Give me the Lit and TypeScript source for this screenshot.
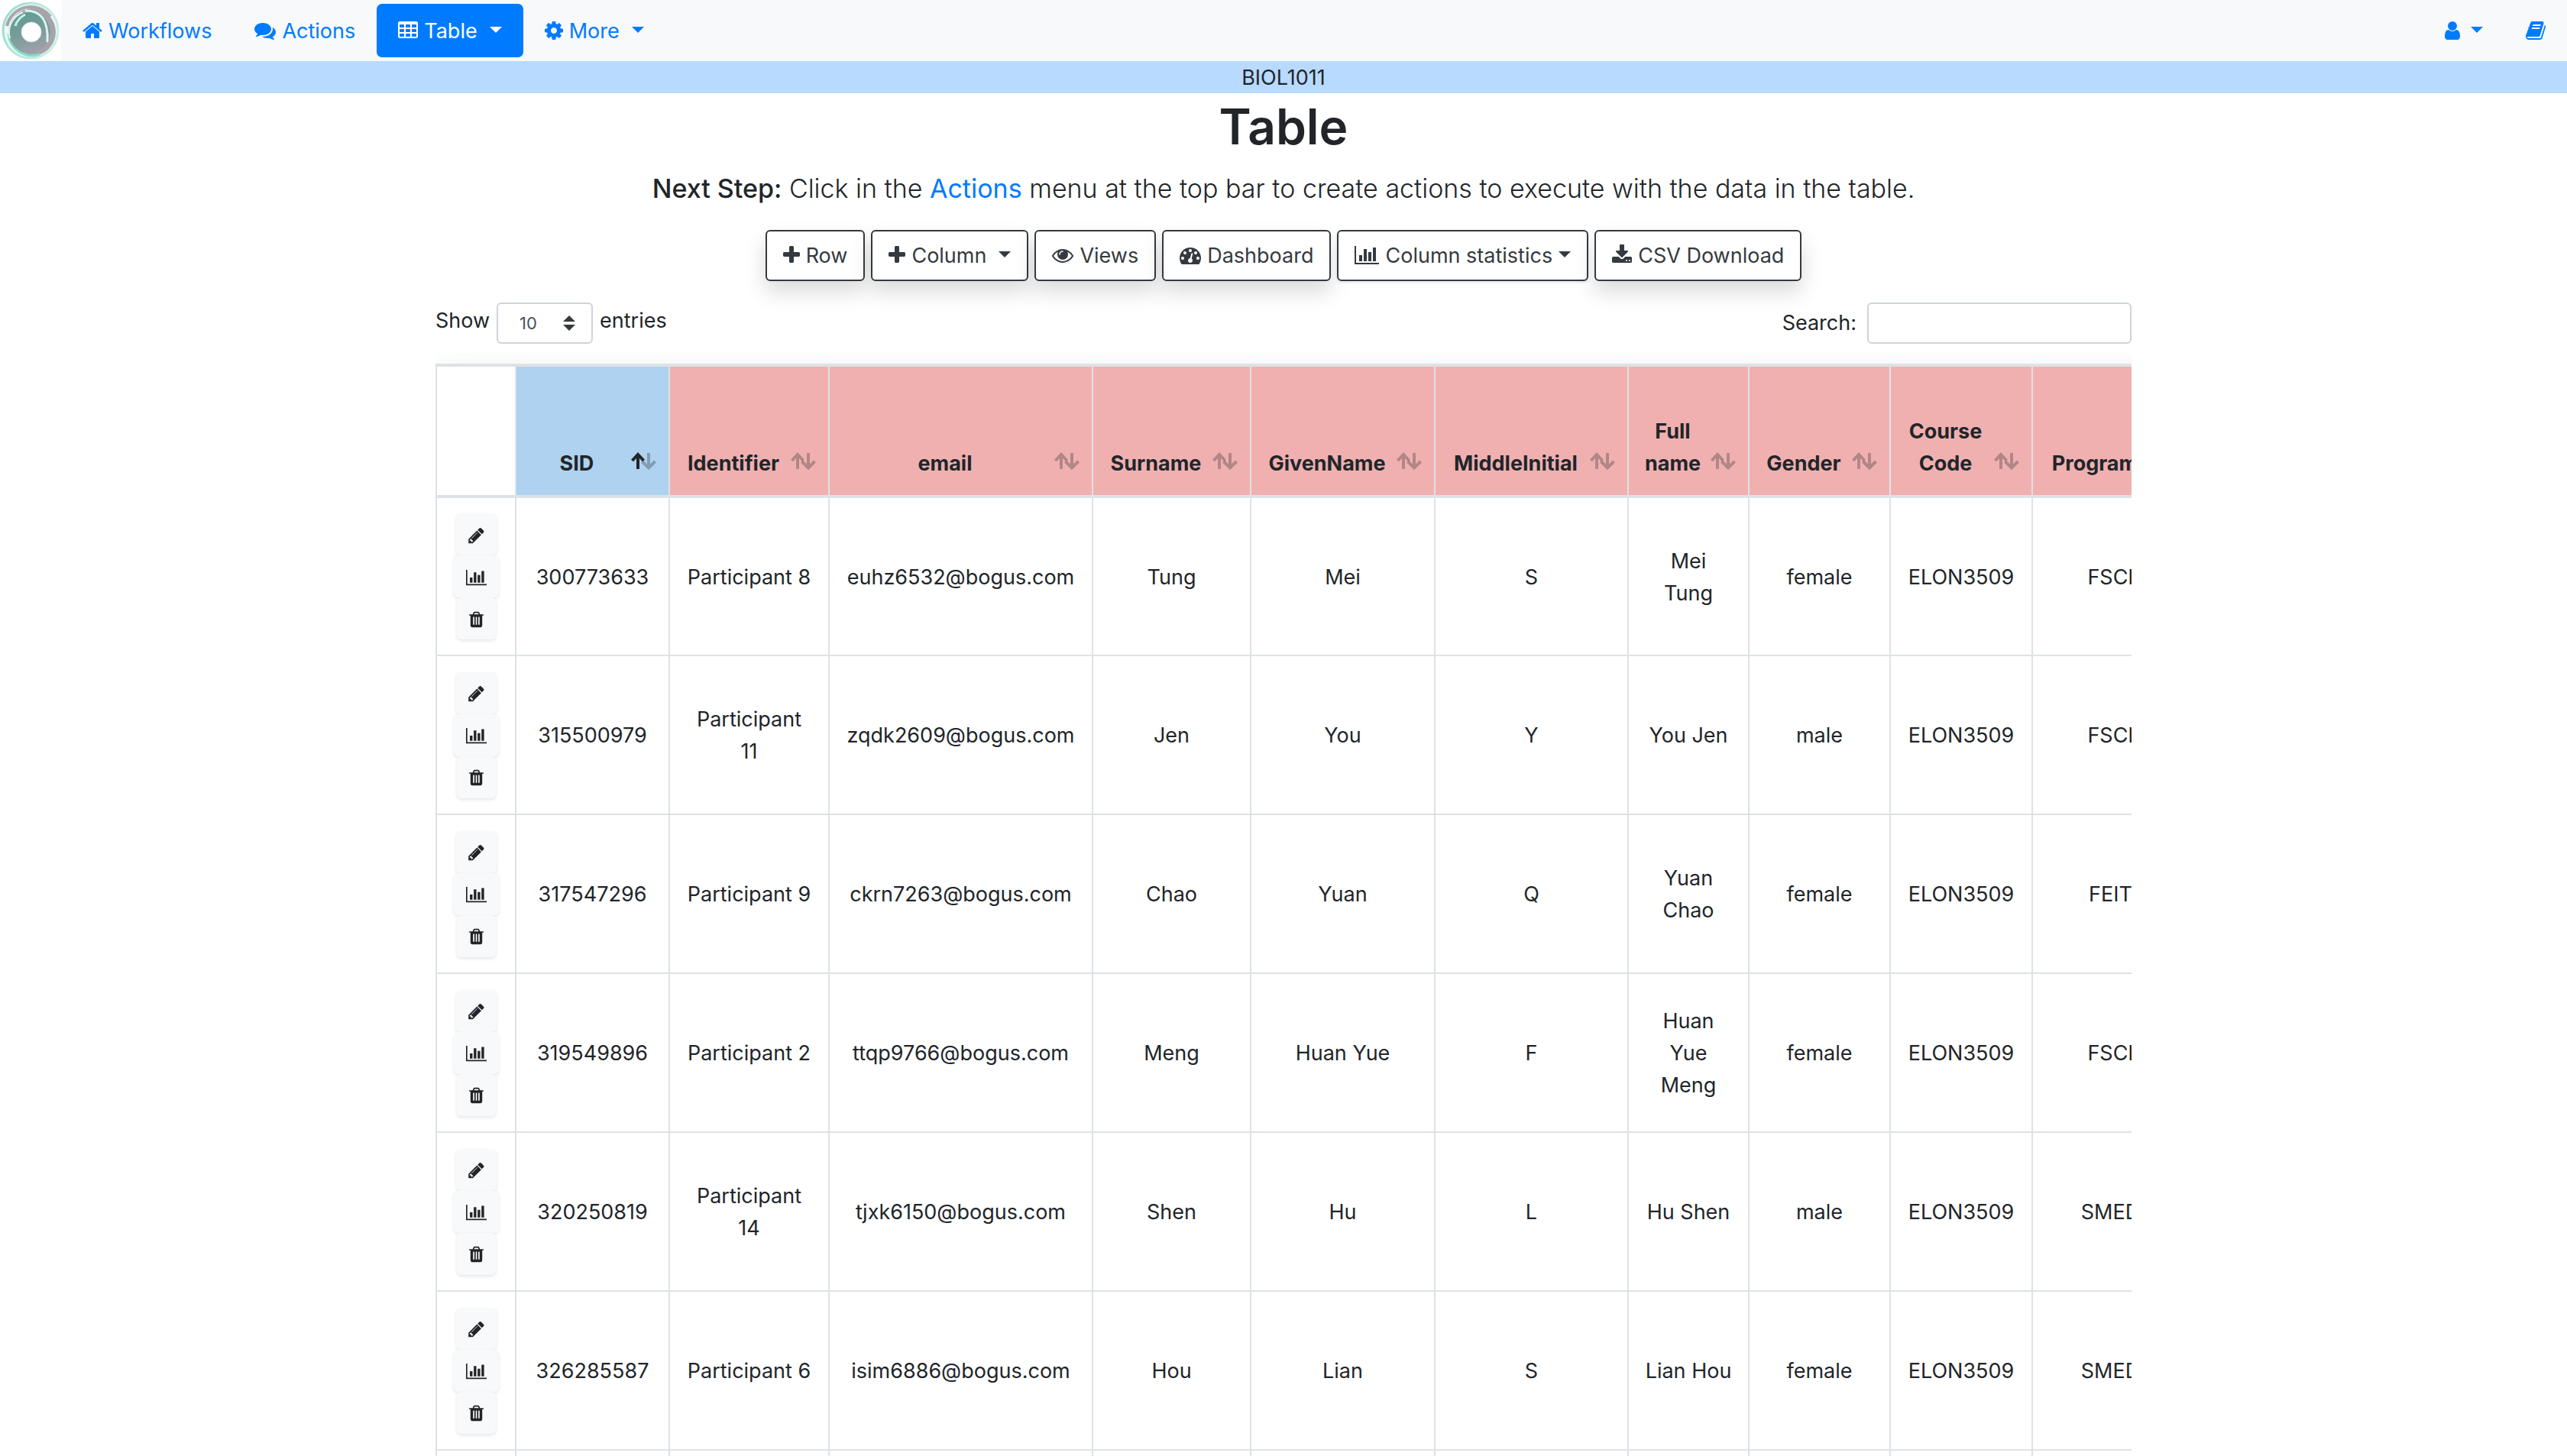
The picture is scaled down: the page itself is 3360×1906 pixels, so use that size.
import { LitElement, html, css, svg } from "lit";
import { customElement } from "lit/decorators.js";

interface Icon {
  box: string;
  w: number;
  d: string;
}

// Glyph outlines on a 1792-unit em; `w` is the advance width in units.
const ICONS: Record<string, Icon> = {
  home: { box: "64 0 1664 1792", w: 1664, d: "M1472 992v480q0 26-19 45t-45 19h-384v-384h-256v384h-384q-26 0-45-19t-19-45v-480q0-1 .5-3t.5-3l575-474 575 474q1 2 1 6zm223-69l-62 74q-8 9-21 11h-3q-13 0-21-7l-692-577-692 577q-12 8-24 7-13-2-21-11l-62-74q-8-10-7-23.5t11-21.5l719-599q32-26 76-26t76 26l244 204v-195q0-14 9-23t23-9h192q14 0 23 9t9 23v408l219 182q10 8 11 21.5t-7 23.5z" },
  comments: { box: "0 0 1792 1792", w: 1792, d: "M1408 768q0 139-94 257t-256.5 186.5-353.5 68.5q-86 0-176-16-124 88-278 128-36 9-86 16h-3q-11 0-20.5-8t-11.5-21q-1-3-1-6.5t.5-6.5 2-6l2.5-5 3.5-5.5 4-5 4.5-5 4-4.5q5-6 23-25t26-29.5 22.5-29 25-38.5 20.5-44q-124-72-195-177t-71-224q0-139 94-257t256.5-186.5 353.5-68.5 353.5 68.5 256.5 186.5 94 257zm384 256q0 120-71 224.5t-195 176.5q10 24 20.5 44t25 38.5 22.5 29 26 29.5 23 25q1 1 4 4.5t4.5 5 4 5 3.5 5.5l2.5 5 2 6 .5 6.5-1 6.5q-3 14-13 22t-22 7q-50-7-86-16-154-40-278-128-90 16-176 16-271 0-472-132 58 4 88 4 161 0 309-45t264-129q125-92 192-212t67-254q0-77-23-152 129 71 204 178t75 230z" },
  table: { box: "64 0 1664 1792", w: 1664, d: "M576 1376v-192q0-14-9-23t-23-9h-320q-14 0-23 9t-9 23v192q0 14 9 23t23 9h320q14 0 23-9t9-23zm0-384v-192q0-14-9-23t-23-9h-320q-14 0-23 9t-9 23v192q0 14 9 23t23 9h320q14 0 23-9t9-23zm512 384v-192q0-14-9-23t-23-9h-320q-14 0-23 9t-9 23v192q0 14 9 23t23 9h320q14 0 23-9t9-23zm-512-768v-192q0-14-9-23t-23-9h-320q-14 0-23 9t-9 23v192q0 14 9 23t23 9h320q14 0 23-9t9-23zm512 384v-192q0-14-9-23t-23-9h-320q-14 0-23 9t-9 23v192q0 14 9 23t23 9h320q14 0 23-9t9-23zm512 384v-192q0-14-9-23t-23-9h-320q-14 0-23 9t-9 23v192q0 14 9 23t23 9h320q14 0 23-9t9-23zm-512-768v-192q0-14-9-23t-23-9h-320q-14 0-23 9t-9 23v192q0 14 9 23t23 9h320q14 0 23-9t9-23zm512 384v-192q0-14-9-23t-23-9h-320q-14 0-23 9t-9 23v192q0 14 9 23t23 9h320q14 0 23-9t9-23zm0-384v-192q0-14-9-23t-23-9h-320q-14 0-23 9t-9 23v192q0 14 9 23t23 9h320q14 0 23-9t9-23zm128-320v1088q0 66-47 113t-113 47h-1344q-66 0-113-47t-47-113v-1088q0-66 47-113t113-47h1344q66 0 113 47t47 113z" },
  cog: { box: "128 0 1536 1792", w: 1536, d: "M1152 896q0-106-75-181t-181-75-181 75-75 181 75 181 181 75 181-75 75-181zm512-109v222q0 12-8 23t-20 13l-185 28q-19 54-39 91 35 50 107 138 10 12 10 25t-9 23q-27 37-99 108t-94 71q-12 0-26-9l-138-108q-44 23-91 38-16 136-29 186-7 28-36 28h-222q-14 0-24.5-8.5t-11.5-21.5l-28-184q-49-16-90-37l-141 107q-10 9-25 9-14 0-25-11-126-114-165-168-7-10-7-23 0-12 8-23 15-21 51-66.5t54-70.5q-27-50-41-99l-183-27q-13-2-21-12.5t-8-23.5v-222q0-12 8-23t19-13l186-28q14-46 39-92-40-57-107-138-10-12-10-24 0-10 9-23 26-36 98.5-107.5t94.5-71.5q13 0 26 10l138 107q44-23 91-38 16-136 29-186 7-28 36-28h222q14 0 24.5 8.5t11.5 21.5l28 184q49 16 90 37l142-107q9-9 24-9 13 0 25 10 129 119 165 170 7 8 7 22 0 12-8 23-15 21-51 66.5t-54 70.5q26 50 41 98l183 28q13 2 21 12.5t8 23.5z" },
  user: { box: "256 0 1280 1792", w: 1280, d: "M1536 1399q0 109-62.5 187t-150.5 78h-854q-88 0-150.5-78t-62.5-187q0-85 8.5-160.5t31.5-152 58.5-131 94-89 134.5-34.5q131 128 313 128t313-128q76 0 134.5 34.5t94 89 58.5 131 31.5 152 8.5 160.5zm-256-887q0 159-112.5 271.5t-271.5 112.5-271.5-112.5-112.5-271.5 112.5-271.5 271.5-112.5 271.5 112.5 112.5 271.5z" },
  book: { box: "64 0 1664 1792", w: 1664, d: "M1703 478q40 57 18 129l-275 906q-19 64-76.5 107.5t-122.5 43.5h-923q-77 0-148.5-53.5t-99.5-131.5q-24-67-2-127 0-4 3-27t4-37q1-8-3-21.5t-3-19.5q2-11 8-21t16.5-23.5 16.5-23.5q23-38 45-91.5t30-91.5q3-10 .5-30t-.5-28q3-11 17-28t17-23q21-36 42-92t25-90q1-9-2.5-32t.5-28q4-13 22-30.5t22-22.5q19-26 42.5-84.5t27.5-96.5q1-8-3-25.5t-2-26.5q2-8 9-18t18-23 17-21q8-12 16.5-30.5t15-35 16-36 19.5-32 26.5-23.5 36-11.5 47.5 5.5l-1 3q38-9 51-9h761q74 0 114 56t18 130l-274 906q-36 119-71.5 153.5t-128.5 34.5h-869q-27 0-38 15-11 16-1 43 24 70 144 70h923q29 0 56-15.5t35-41.5l300-987q7-22 5-57 38 15 59 43zm-1064 2q-4 13 2 22.5t20 9.5h608q13 0 25.5-9.5t16.5-22.5l21-64q4-13-2-22.5t-20-9.5h-608q-13 0-25.5 9.5t-16.5 22.5zm-83 256q-4 13 2 22.5t20 9.5h608q13 0 25.5-9.5t16.5-22.5l21-64q4-13-2-22.5t-20-9.5h-608q-13 0-25.5 9.5t-16.5 22.5z" },
  plus: { box: "192 0 1408 1792", w: 1408, d: "M1600 736v192q0 40-28 68t-68 28h-416v416q0 40-28 68t-68 28h-192q-40 0-68-28t-28-68v-416h-416q-40 0-68-28t-28-68v-192q0-40 28-68t68-28h416v-416q0-40 28-68t68-28h192q40 0 68 28t28 68v416h416q40 0 68 28t28 68z" },
  eye: { box: "0 0 1792 1792", w: 1792, d: "M1664 960q-152-236-381-353 61 104 61 225 0 185-131.5 316.5t-316.5 131.5-316.5-131.5-131.5-316.5q0-121 61-225-229 117-381 353 133 205 333.5 326.5t434.5 121.5 434.5-121.5 333.5-326.5zm-720-384q0-20-14-34t-34-14q-125 0-214.5 89.5t-89.5 214.5q0 20 14 34t34 14 34-14 14-34q0-86 61-147t147-61q20 0 34-14t14-34zm848 384q0 34-20 69-140 230-376.5 368.5t-499.5 138.5-499.5-139-376.5-368q-20-35-20-69t20-69q140-229 376.5-368t499.5-139 499.5 139 376.5 368q20 35 20 69z" },
  gauge: { box: "0 0 1792 1792", w: 1792, d: "M384 1152q0-53-37.5-90.5t-90.5-37.5-90.5 37.5-37.5 90.5 37.5 90.5 90.5 37.5 90.5-37.5 37.5-90.5zm192-448q0-53-37.5-90.5t-90.5-37.5-90.5 37.5-37.5 90.5 37.5 90.5 90.5 37.5 90.5-37.5 37.5-90.5zm428 481l101-382q6-26-7.5-48.5t-38.5-29.5-48 6.5-30 39.5l-101 382q-60 5-107 43.5t-63 98.5q-20 77 20 146t117 89 146-20 89-117q16-60-6-117t-72-91zm660-33q0-53-37.5-90.5t-90.5-37.5-90.5 37.5-37.5 90.5 37.5 90.5 90.5 37.5 90.5-37.5 37.5-90.5zm-640-640q0-53-37.5-90.5t-90.5-37.5-90.5 37.5-37.5 90.5 37.5 90.5 90.5 37.5 90.5-37.5 37.5-90.5zm448 192q0-53-37.5-90.5t-90.5-37.5-90.5 37.5-37.5 90.5 37.5 90.5 90.5 37.5 90.5-37.5 37.5-90.5zm320 448q0 261-141 483-19 29-54 29h-1402q-35 0-54-29-141-221-141-483 0-182 71-348t191-286 286-191 348-71 348 71 286 191 191 286 71 348z" },
  chart: { box: "0 128 2048 1792", w: 2048, d: "M640 1024v512h-256v-512h256zm384-512v1024h-256v-1024h256zm1024 1152v128h-2048v-1536h128v1408h1920zm-640-896v768h-256v-768h256zm384-384v1152h-256v-1152h256z" },
  download: { box: "64 0 1664 1792", w: 1664, d: "M1344 1344q0-26-19-45t-45-19-45 19-19 45 19 45 45 19 45-19 19-45zm256 0q0-26-19-45t-45-19-45 19-19 45 19 45 45 19 45-19 19-45zm128-224v320q0 40-28 68t-68 28h-1472q-40 0-68-28t-28-68v-320q0-40 28-68t68-28h465l135 136q58 56 136 56t136-56l136-136h464q40 0 68 28t28 68zm-325-569q17 41-14 70l-448 448q-18 19-45 19t-45-19l-448-448q-31-29-14-70 17-39 59-39h256v-448q0-26 19-45t45-19h256q26 0 45 19t19 45v448h256q42 0 59 39z" },
  pencil: { box: "128 0 1536 1792", w: 1536, d: "M491 1536l91-91-235-235-91 91v107h128v128h107zm523-928q0-22-22-22-10 0-17 7l-542 542q-7 7-7 17 0 22 22 22 10 0 17-7l542-542q7-7 7-17zm-54-192l416 416-832 832h-416v-416zm683 96q0 53-37 90l-166 166-416-416 166-165q36-38 90-38 53 0 91 38l235 234q37 39 37 91z" },
  trash: { box: "192 0 1408 1792", w: 1408, d: "M704 1376v-704q0-14-9-23t-23-9h-64q-14 0-23 9t-9 23v704q0 14 9 23t23 9h64q14 0 23-9t9-23zm256 0v-704q0-14-9-23t-23-9h-64q-14 0-23 9t-9 23v704q0 14 9 23t23 9h64q14 0 23-9t9-23zm256 0v-704q0-14-9-23t-23-9h-64q-14 0-23 9t-9 23v704q0 14 9 23t23 9h64q14 0 23-9t9-23zm-544-992h448l-48-117q-7-9-17-11h-317q-10 2-17 11zm928 32v64q0 14-9 23t-23 9h-96v948q0 83-47 143.5t-113 60.5h-832q-66 0-113-58.5t-47-141.5v-952h-96q-14 0-23-9t-9-23v-64q0-14 9-23t23-9h309l70-167q15-37 54-63t79-26h320q40 0 79 26t54 63l70 167h309q14 0 23 9t9 23z" },
};

const icon = (name: string, size = 28) => {
  const i = ICONS[name];
  return html`<svg class="icon" aria-hidden="true" viewBox=${i.box} width=${Math.round((i.w * size) / 1792)} height=${size}>${svg`<path d=${i.d}></path>`}</svg>`;
};

const COLUMNS = ["SID", "Identifier", "email", "Surname", "GivenName", "MiddleInitial", "Full\nname", "Gender", "Course\nCode", "Program"];

const ROWS = [
  ["300773633", "Participant 8", "euhz6532@bogus.com", "Tung", "Mei", "S", "Mei\nTung", "female", "ELON3509", "FSCI"],
  ["315500979", "Participant\n11", "zqdk2609@bogus.com", "Jen", "You", "Y", "You Jen", "male", "ELON3509", "FSCI"],
  ["317547296", "Participant 9", "ckrn7263@bogus.com", "Chao", "Yuan", "Q", "Yuan\nChao", "female", "ELON3509", "FEIT"],
  ["319549896", "Participant 2", "ttqp9766@bogus.com", "Meng", "Huan Yue", "F", "Huan\nYue\nMeng", "female", "ELON3509", "FSCI"],
  ["320250819", "Participant\n14", "tjxk6150@bogus.com", "Shen", "Hu", "L", "Hu Shen", "male", "ELON3509", "SMED"],
  ["326285587", "Participant 6", "isim6886@bogus.com", "Hou", "Lian", "S", "Lian Hou", "female", "ELON3509", "SMED"],
];

@customElement("app-root")
export class AppRoot extends LitElement {
  static styles = css`
    :host {
      display: block;
      height: 100vh;
      overflow-y: auto;
      scrollbar-width: none;
      background: #fff;
      color: #212529;
      font: 400 27px/42px Inter, "Liberation Sans", sans-serif;
    }
    *, *::before, *::after { box-sizing: border-box; }
    a { color: #007bff; text-decoration: none; }
    button, select, input { font: inherit; color: inherit; margin: 0; }
    button { cursor: pointer; }
    .icon { fill: currentColor; vertical-align: -4px; flex: none; }
    .caret {
      display: inline-block;
      border: 8px solid transparent;
      border-top-color: currentColor;
      border-bottom: 0;
      vertical-align: 7px;
      margin-left: 16px;
    }
    .caret.near { margin-left: 8px; }

    .nav { display: flex; align-items: center; height: 80px; background: #f8f9fa; }
    .logo { display: block; }
    .menu { display: flex; flex: 1; }
    .item {
      display: block;
      height: 70px;
      padding: 15px 28px 13px;
      border: 0;
      border-radius: 7px;
      background: none;
      color: #007bff;
      white-space: nowrap;
    }
    .item .icon { margin-right: 8px; }
    .item.active { background: #007bff; color: #fff; }
    .item.tool .icon { margin-right: 0; }
    .item.tool .caret { margin-left: 14px; }

    .course { background: #b8daff; text-align: center; height: 42px; line-height: 44px; }
    .page { max-width: 2220px; margin: 0 auto; }
    h1 { margin: 2px 0 0; font-size: 64px; line-height: 84px; font-weight: 600; text-align: center; }
    .lead { margin: 12px 0 0; font-size: 34px; line-height: 54px; font-weight: 300; text-align: center; }
    .lead b { font-weight: 500; }
    .lead a { font-weight: 400; }

    .toolbar { display: flex; justify-content: center; gap: 8px; margin-top: 27px; }
    .btn {
      height: 67px;
      padding: 0 21px;
      border: 2px solid #343a40;
      border-radius: 6px;
      background: #fff;
      color: #343a40;
      white-space: nowrap;
      box-shadow: 0 14px 28px rgba(0, 0, 0, 0.15);
    }
    .btn.flat { box-shadow: 0 2px 4px rgba(0, 0, 0, 0.1); }
    .btn .icon { margin-right: 8px; }

    .controls { display: flex; justify-content: space-between; margin: 28px 0 12px; }
    .controls label { display: flex; }
    .length { gap: 9px; line-height: 48px; }
    .search { gap: 14px; line-height: 54px; }
    .pick {
      width: 126px;
      height: 54px;
      padding: 0 24px 0 28px;
      border: 2px solid #ced4da;
      border-radius: 6px;
      appearance: none;
      color: #495057;
      font-size: 22px;
      background: #fff url("data:image/svg+xml,%3csvg xmlns='http://www.w3.org/2000/svg' viewBox='0 0 4 5'%3e%3cpath fill='%23343a40' d='M2 0L0 2h4zm0 5L0 3h4z'/%3e%3c/svg%3e") no-repeat right 21px center / 16px 20px;
    }
    .find { width: 346px; height: 54px; border: 2px solid #ced4da; border-radius: 6px; background: #fff; padding: 0 14px; }

    .scroller { overflow-x: auto; scrollbar-width: none; padding-top: 14px; }
    .grid { width: 2294px; table-layout: fixed; border-collapse: collapse; text-align: center; box-shadow: 0 14px 42px rgba(0, 0, 0, 0.1); }
    .grid th, .grid td { border: 2px solid #dee2e6; padding: 0; white-space: pre-line; }
    .grid th {
      height: 172px;
      border-top-width: 4px;
      border-bottom-width: 4px;
      padding: 0 0 20px;
      vertical-align: bottom;
      background: #f1b0b0;
      font-weight: 700;
    }
    .grid th.blank { background: #fff; }
    .grid th.key { background: #aed2f0; }
    .grid td { height: 208px; vertical-align: middle; padding-top: 2px; }
    .grid td.tools { padding-top: 0; }
    .c-actions { width: 104px; }
    .c-0 { width: 201px; } .c-1 { width: 209px; } .c-2 { width: 345px; }
    .c-3 { width: 207px; } .c-4 { width: 241px; } .c-5 { width: 253px; }
    .c-6 { width: 158px; } .c-7 { width: 185px; } .c-8 { width: 186px; }
    .c-9 { width: 205px; }
    .head { display: flex; align-items: flex-end; gap: 10px; padding: 0 16px 0 18px; }
    .head .name { flex: 1; }
    .sort { flex: none; margin-bottom: 12px; fill: none; stroke: currentColor; stroke-width: 4; }
    .dim { opacity: 0.3; }

    .ops { display: flex; flex-direction: column; align-items: center; }
    .op {
      height: 55px;
      padding: 0 16px;
      border: 0;
      border-radius: 6px;
      background: #f8f9fa;
      box-shadow: 0 2px 4px rgba(0, 0, 0, 0.1);
      line-height: 42px;
    }
  `;

  private sortIcon(sorted: boolean) {
    return html`<svg class="sort" width="33" height="24" viewBox="0 0 33 24" aria-hidden="true">
      ${svg`<path class=${sorted ? "" : "dim"} d="M9 22V3M1.5 11L9 3L16.5 11"></path>
      <path class="dim" d="M23 1V20M14.5 12L23 20.500L31.500 12"></path>`}
    </svg>`;
  }

  private logo() {
    return html`<svg class="logo" width="80" height="80" viewBox="0 0 80 80" role="img" aria-label="Home">
      ${svg`<defs>
        <linearGradient id="disc" x1="0.3" y1="0" x2="0.6" y2="1">
          <stop offset="0" stop-color="#5f9c94"></stop>
          <stop offset="0.55" stop-color="#7d9c9b"></stop>
          <stop offset="1" stop-color="#a3a1ab"></stop>
        </linearGradient>
        <linearGradient id="rim" x1="0" y1="0" x2="1" y2="0.4">
          <stop offset="0" stop-color="#8fdccb"></stop>
          <stop offset="0.5" stop-color="#b5e6dc"></stop>
          <stop offset="1" stop-color="#c9ece5"></stop>
        </linearGradient>
      </defs>
      <rect width="80" height="80" fill="#fff"></rect>
      <circle cx="40" cy="40" r="36" fill="#eef7f5" stroke="url(#rim)" stroke-width="3"></circle>
      <path d="M9 34A32 32 0 0 1 66 22" fill="none" stroke="#a9a5b0" stroke-width="4"></path>
      <circle cx="42" cy="42" r="31" fill="#a6a3ad"></circle>
      <path d="M11 44A31 31 0 0 0 52 71" fill="none" stroke="#7fe0c9" stroke-width="3"></path>
      <circle cx="39" cy="43" r="27" fill="url(#disc)"></circle>
      <path d="M13 50A28 28 0 0 1 30 16" fill="none" stroke="#e6faf5" stroke-width="2"></path>
      <path d="M20 34Q23 24 33 19" fill="none" stroke="#c4f2e7" stroke-width="3"></path>
      <path d="M34 14Q64 14 62 54" fill="none" stroke="#d9f5ee" stroke-width="3" stroke-linecap="round"></path>
      <circle cx="41" cy="42" r="13" fill="#fff" stroke="#cfe0dd" stroke-width="1"></circle>`}
    </svg>`;
  }

  render() {
    return html`
      <nav class="nav">
        ${this.logo()}
        <div class="menu">
          <a class="item" href="#workflows">${icon("home")}Workflows</a>
          <a class="item" href="#actions">${icon("comments")}Actions</a>
          <button class="item active" type="button">${icon("table")}Table<span class="caret"></span></button>
          <button class="item" type="button">${icon("cog")}More<span class="caret"></span></button>
        </div>
        <button class="item tool" type="button" aria-label="Account">${icon("user")}<span class="caret"></span></button>
        <a class="item tool" href="#docs" aria-label="Documentation">${icon("book")}</a>
      </nav>
      <div class="course">BIOL1011</div>
      <main class="page">
        <h1>Table</h1>
        <p class="lead"><b>Next Step:</b> Click in the <a href="#actions">Actions</a> menu at the top bar to create actions to execute with the data in the table.</p>
        <div class="toolbar">
          <button class="btn" type="button">${icon("plus")}Row</button>
          <button class="btn" type="button">${icon("plus")}Column<span class="caret"></span></button>
          <button class="btn" type="button">${icon("eye")}Views</button>
          <button class="btn" type="button">${icon("gauge")}Dashboard</button>
          <button class="btn flat" type="button">${icon("chart")}Column statistics<span class="caret near"></span></button>
          <button class="btn" type="button">${icon("download")}CSV Download</button>
        </div>
        <div class="controls">
          <label class="length">Show <select class="pick"><option>10</option></select> entries</label>
          <label class="search">Search: <input class="find" type="search" /></label>
        </div>
        <div class="scroller">
          <table class="grid">
            <colgroup>
              <col class="c-actions" />
              ${COLUMNS.map((_, i) => html`<col class="c-${i}" />`)}
            </colgroup>
            <thead>
              <tr>
                <th class="blank"></th>
                ${COLUMNS.map((c, i) => html`<th class=${i === 0 ? "key" : ""} scope="col"><div class="head"><span class="name">${c}</span>${this.sortIcon(i === 0)}</div></th>`)}
              </tr>
            </thead>
            <tbody>
              ${ROWS.map((r) => html`<tr>
                <td class="tools"><div class="ops">
                  <button class="op" type="button" aria-label="Edit">${icon("pencil", 24)}</button>
                  <button class="op" type="button" aria-label="Statistics">${icon("chart", 24)}</button>
                  <button class="op" type="button" aria-label="Delete">${icon("trash", 24)}</button>
                </div></td>
                ${r.map((v) => html`<td>${v}</td>`)}
              </tr>`)}
              <tr><td></td>${COLUMNS.map(() => html`<td></td>`)}</tr>
            </tbody>
          </table>
        </div>
      </main>
    `;
  }
}
